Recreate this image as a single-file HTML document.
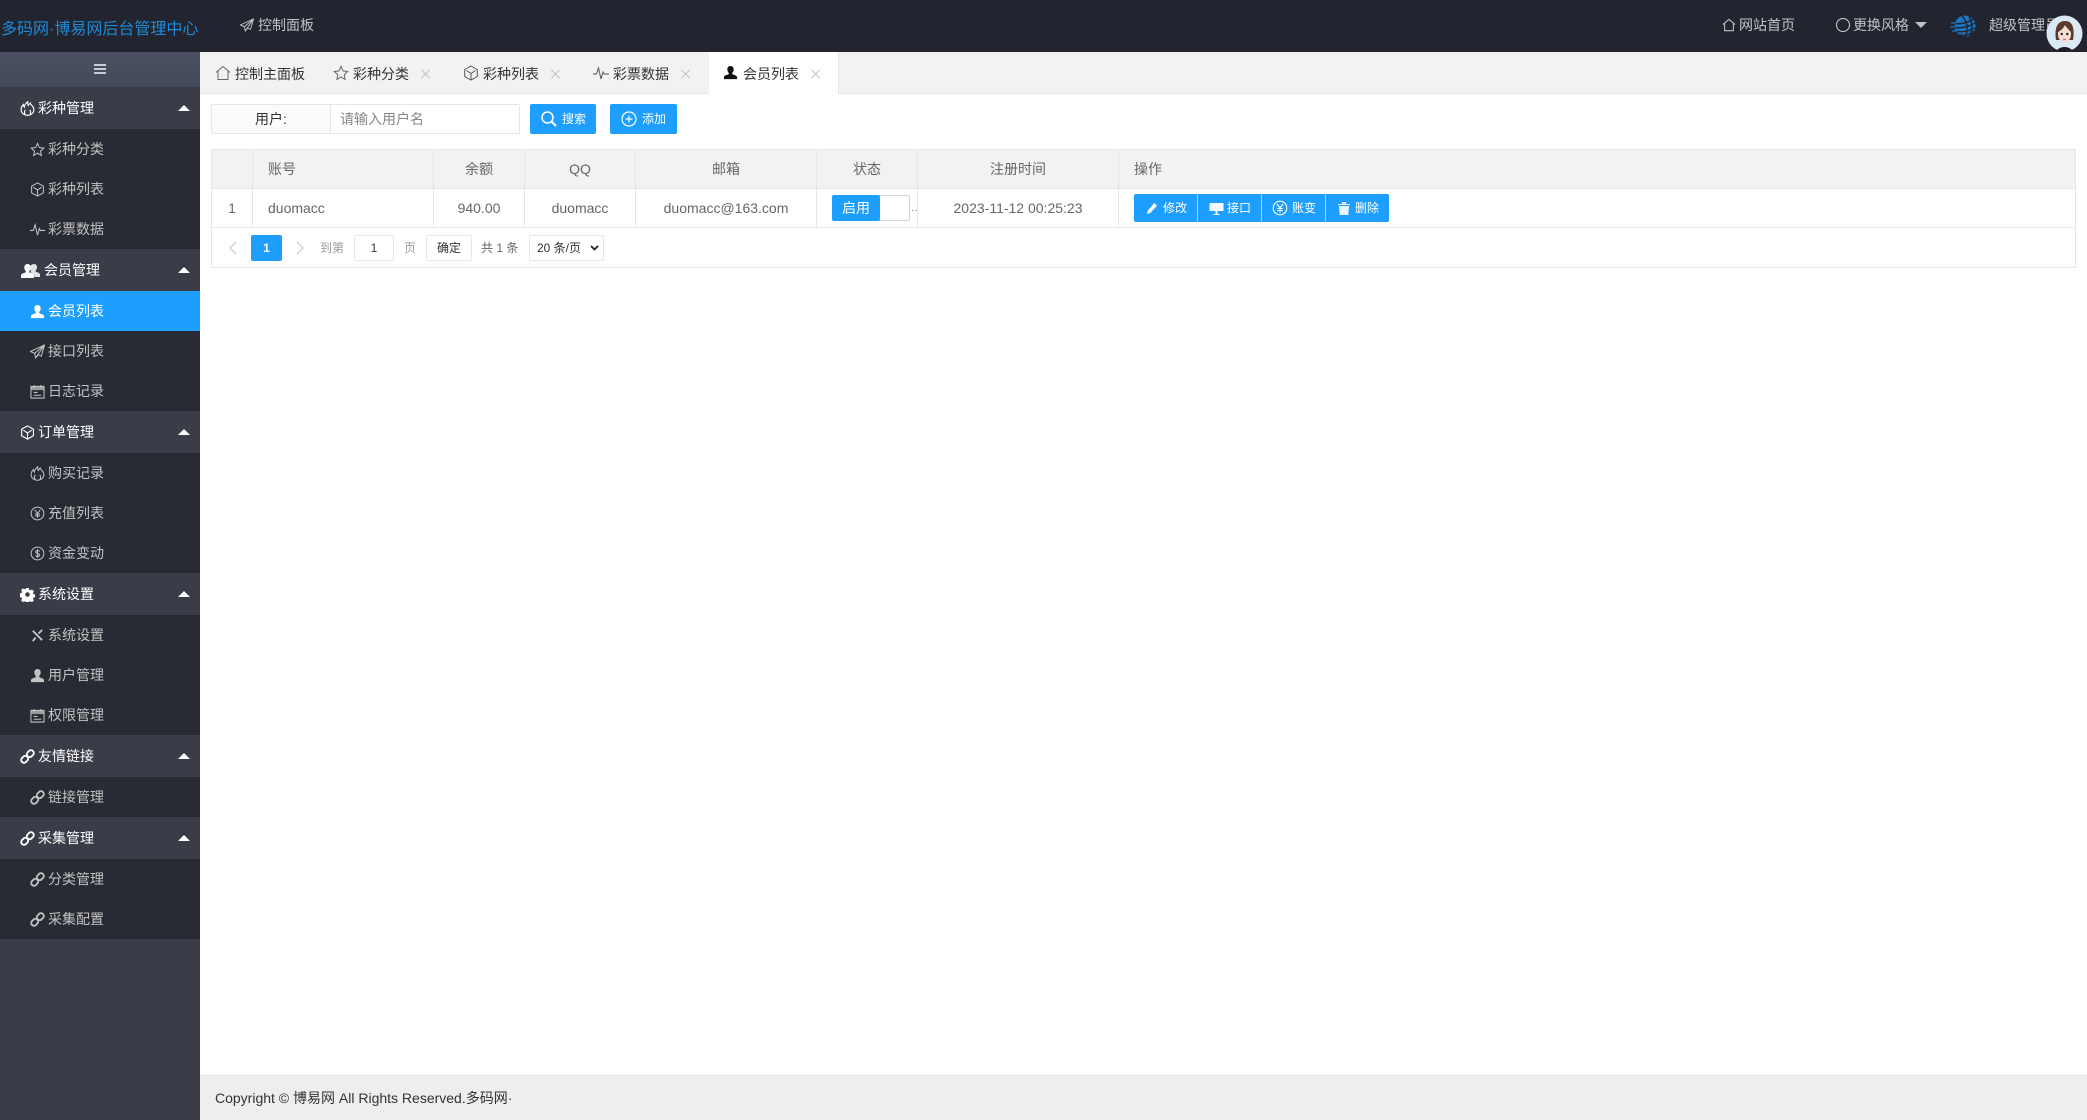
<!DOCTYPE html>
<html lang="zh-CN"><head><meta charset="utf-8"><title>后台管理中心</title>
<style>
*{box-sizing:border-box}
html,body{margin:0;padding:0;width:2087px;height:1120px;overflow:hidden;background:#fff;font-family:"Liberation Sans","Noto Sans CJK SC",sans-serif;font-size:14px;color:#666}
.a{position:absolute}
.t{position:absolute;white-space:nowrap}
svg{position:absolute;overflow:visible}
.g{position:absolute;left:0;width:200px;height:42px;background:#3a3d48;color:#fff;line-height:42px}
.i{position:absolute;left:0;width:200px;height:40px;background:#282b33;color:#c2c2c2;line-height:40px}
.g span,.i span{position:absolute;white-space:nowrap}
.g span{left:38px}.i span{left:48px}
.g svg{left:20px;top:14px;width:15px;height:15px;fill:none;stroke:#fff;stroke-width:1.2}
.i svg{left:30px;top:13px;width:15px;height:15px;fill:none;stroke:#c2c2c2;stroke-width:1.1}
.g i{position:absolute;left:178px;top:18px;border-left:6px solid transparent;border-right:6px solid transparent;border-bottom:6px solid #fff}
.th{position:absolute;top:149px;height:40px;line-height:39px;text-align:center;background:#f2f2f2;border-right:1px solid #e6e6e6;border-top:1px solid #e6e6e6;border-bottom:1px solid #e6e6e6}
.td{position:absolute;top:189px;height:39px;line-height:38px;text-align:center;background:#fff;border-right:1px solid #e6e6e6;border-bottom:1px solid #e6e6e6}
.tab{position:absolute;top:65px;white-space:nowrap;color:#333;line-height:18px}
.x{position:absolute;top:69px;width:10px;height:10px}
.x:before,.x:after{content:"";position:absolute;left:4px;top:-1px;width:1px;height:12px;background:#c4c4c4}
.x:before{transform:rotate(45deg)}.x:after{transform:rotate(-45deg)}
.btn{position:absolute;background:#1e9fff;color:#fff;border-radius:2px}
.box{position:absolute;background:#fff;border:1px solid #e6e6e6;border-radius:2px;text-align:center}
</style></head><body>
<svg width="0" height="0" style="position:absolute"><defs>
<symbol id="star" viewBox="0 0 16 16"><path d="M8 1.500l2 4.400 4.700.6-3.500 3.200.9 4.700L8 11.900l-4.100 2.500.9-4.700L1.300 6.500 6 5.900z"/></symbol>
<symbol id="box" viewBox="0 0 16 16"><path d="M8 1l6.300 3.500v7L8 15l-6.300-3.500v-7zM3.500 5.500L8 8.500l4.500-3M8 8.500v6"/></symbol>
<symbol id="pulse" viewBox="0 0 16 16"><path d="M0 9h3.500l2-6 2.500 11 2-7 1 2h5"/></symbol>
<symbol id="fire" viewBox="0 0 16 16"><path d="M8 15.200c-3.800 0-6.800-2.500-6.800-6 0-2.400 1-4 2.400-5.400.1 1.200.4 2 1 2.700C5 4.300 6 2.300 8.300.8c-.3 1.700-.1 3 .6 4 .4-.8 1-1.800 2-2.600 0 1.500 3.900 3.500 3.900 7 0 3.500-3 6-6.800 6z"/><path d="M5.800 15c-1.200-1.400-1.300-3.400-.3-5.600M10.300 15c1.200-1.400 1.300-3.400.3-5.600"/></symbol>
<symbol id="user" viewBox="0 0 16 16"><path stroke="none" d="M8 1c2.200 0 3.400 1.700 3.400 3.700 0 1.500-.7 3-1.600 3.800v1.200c1 .6 5 1.200 5.200 3.300V15H1v-2c.2-2.100 4.200-2.700 5.200-3.300V8.500C5.300 7.700 4.600 6.200 4.600 4.700 4.600 2.700 5.800 1 8 1z" fill="currentColor"/></symbol>
<symbol id="send" viewBox="0 0 16 16"><path d="M15.500 1L.5 8l4.500 2 1 4.800 2.800-3.300 3.200 1.500zM15.500 1L5 10M15.500 1L6 14.800"/></symbol>
<symbol id="cal" viewBox="0 0 16 16"><path d="M1 2.500h14v12.500H1zM4.500 1v3M11.500 1v3M4 9h4M4 12h8"/><path d="M1 2.500h14v4H1z" fill="currentColor" stroke="none" opacity=".75"/></symbol>
<symbol id="yen" viewBox="0 0 16 16"><circle cx="8" cy="8" r="6.800"/><path d="M5 4l3 4 3-4M8 8v4.500M5.300 8.500h5.400M5.300 10.500h5.400"/></symbol>
<symbol id="dollar" viewBox="0 0 16 16"><circle cx="8" cy="8" r="6.800"/><path d="M10.300 5.800C9.800 4.800 6 4.300 6 6.300c0 2.200 4.300 1.300 4.300 3.400 0 2-3.900 1.600-4.500.4M8 3.500v9"/></symbol>
<symbol id="gear" viewBox="0 0 16 16"><path fill="currentColor" stroke="none" fill-rule="evenodd" d="M6.600 1h2.800l.4 2 1.200.6 1.800-1 2 2-1 1.800.6 1.200 2 .4v2.800l-2 .4-.6 1.200 1 1.800-2 2-1.800-1-1.200.5-.4 2H6.600l-.4-2-1.200-.5-1.800 1-2-2 1-1.800-.6-1.200-2-.4V6.800l2-.4.600-1.200-1-1.800 2-2 1.800 1 1.200-.6zM8 5.600a2.400 2.400 0 1 0 0 4.800 2.400 2.400 0 0 0 0-4.800z"/></symbol>
<symbol id="tools" viewBox="0 0 16 16"><path stroke-width="2" d="M3 3l10 10M13 2L9 6M6 10l-3 4"/></symbol>
<symbol id="link" viewBox="0 0 16 16"><g stroke-width="2"><rect x="8" y="1" width="6" height="8" rx="3" transform="rotate(45 11 5)"/><rect x="2" y="7" width="6" height="8" rx="3" transform="rotate(45 5 11)"/></g></symbol>
<symbol id="home" viewBox="0 0 16 16"><path d="M1 7.500L8 1.500l7 6M3 6.500V14.500h10V6.500"/></symbol>
</defs></svg>

<!-- top bar -->
<div class="a" style="left:0;top:0;width:2087px;height:52px;background:#22252f"></div>
<div class="t" style="left:1px;top:18px;font-size:16px;line-height:24px;color:#1f8ad8">多码网·博易网后台管理中心</div>
<svg style="left:240px;top:18px;width:14px;height:14px;fill:none;stroke:#c2c2c2;stroke-width:1.100"><use href="#send"/></svg>
<div class="t" style="left:258px;top:15px;line-height:20px;color:#c2c2c2">控制面板</div>
<svg style="left:1722px;top:18px;width:14px;height:14px;fill:none;stroke:#c2c2c2;stroke-width:1.200"><use href="#home"/></svg>
<div class="t" style="left:1739px;top:15px;line-height:20px;color:#c2c2c2">网站首页</div>
<div class="a" style="left:1836px;top:18px;width:14px;height:14px;border:1.500px solid #d0d0d0;border-radius:50%"></div>
<div class="t" style="left:1853px;top:15px;line-height:20px;color:#c2c2c2">更换风格</div>
<div class="a" style="left:1915px;top:22px;border-left:6px solid transparent;border-right:6px solid transparent;border-top:6px solid #c2c2c2"></div>
<svg style="left:1950px;top:13px;width:26px;height:26px" viewBox="0 0 26 26"><circle cx="15" cy="13" r="10.500" fill="#1a76c4"/><path d="M3 10c8 2 15 0 22-5M2 14c8 2 16 0 23-4M4 18c8 2 15 0 21-3M9 22c6 1 11 0 15-4M12 3c5 5 7 14 3 21M19 3c3 6 4 13 1 19" fill="none" stroke="#22252f" stroke-width="1.500"/><path d="M1 10h5M0 14h5M2 18h5" stroke="#1a76c4" stroke-width="1.300"/></svg>
<div class="t" style="left:1989px;top:15px;line-height:20px;color:#c2c2c2">超级管理员</div>
<svg style="left:2046px;top:15px;width:37px;height:37px;z-index:5" viewBox="0 0 37 37"><circle cx="18.500" cy="18.500" r="18" fill="#dbe9f4"/><path d="M10 25C8 12 12 6 19 6c7 0 10 6 8 19z" fill="#5a3a2c"/><ellipse cx="18.500" cy="19" rx="6.500" ry="8.500" fill="#f5dcd0"/><path d="M12 17c2-1 5-3 7-7 2 3 4 5 6 7l1-6-7-4-7 3z" fill="#5a3a2c"/><circle cx="15.700" cy="19" r="1.200" fill="#222"/><circle cx="21.300" cy="19" r="1.200" fill="#222"/><path d="M17.300 24c.8.600 1.700.6 2.500 0" stroke="#c55" fill="none"/><path d="M11 35c2-2 5-3 7.500-3s5.500 1 7.500 3a18 18 0 0 1-15 0z" fill="#1e1e22"/></svg>

<!-- sidebar -->
<div class="a" style="left:0;top:52px;width:200px;height:1068px;background:#3a3d48"></div>
<div class="a" style="left:0;top:52px;width:200px;height:35px;background:linear-gradient(#4a5062,#454a5a)"></div>
<div class="a" style="left:94px;top:64px;width:12px;height:2px;background:#c9ccd2;box-shadow:0 4px 0 #c9ccd2,0 8px 0 #c9ccd2"></div>

<div class="g" style="top:87px"><svg><use href="#fire"/></svg><span>彩种管理</span><i></i></div>
<div class="i" style="top:129px"><svg><use href="#star"/></svg><span>彩种分类</span></div>
<div class="i" style="top:169px"><svg><use href="#box"/></svg><span>彩种列表</span></div>
<div class="i" style="top:209px"><svg><use href="#pulse"/></svg><span>彩票数据</span></div>
<div class="g" style="top:249px"><svg style="width:19px;height:15px;left:21px;color:#fff" viewBox="0 0 19 15"><path fill="#fff" stroke="none" d="M13 1c2 0 3 1.500 3 3.200 0 1.300-.6 2.600-1.300 3.300v1.100c.8.500 4.100 1 4.300 2.900V14h-5.500c-.1-2.700-2.200-3.700-3.700-4.300V7.500c-.6-.7-1-2-1-3.300C8.800 2.500 11 1 13 1z" opacity=".85"/><path fill="#fff" stroke="none" d="M6.500 1c2.100 0 3.200 1.600 3.200 3.500 0 1.400-.6 2.800-1.500 3.600v1.200c1 .6 4.600 1.100 4.800 3.100V15H0v-2.600c.2-2 3.800-2.500 4.800-3.100V8.100C3.900 7.300 3.300 5.900 3.300 4.500 3.300 2.600 4.400 1 6.500 1z"/></svg><span style="left:44px">会员管理</span><i></i></div>
<div class="i" style="top:291px;background:#1e9fff;color:#fff"><svg style="color:#fff"><use href="#user"/></svg><span>会员列表</span></div>
<div class="i" style="top:331px"><svg><use href="#send"/></svg><span>接口列表</span></div>
<div class="i" style="top:371px;color:#c2c2c2"><svg><use href="#cal"/></svg><span>日志记录</span></div>
<div class="g" style="top:411px"><svg><use href="#box"/></svg><span>订单管理</span><i></i></div>
<div class="i" style="top:453px"><svg><use href="#fire"/></svg><span>购买记录</span></div>
<div class="i" style="top:493px"><svg><use href="#yen"/></svg><span>充值列表</span></div>
<div class="i" style="top:533px"><svg><use href="#dollar"/></svg><span>资金变动</span></div>
<div class="g" style="top:573px"><svg style="color:#fff"><use href="#gear"/></svg><span>系统设置</span><i></i></div>
<div class="i" style="top:615px"><svg><use href="#tools"/></svg><span>系统设置</span></div>
<div class="i" style="top:655px"><svg style="color:#c2c2c2"><use href="#user"/></svg><span>用户管理</span></div>
<div class="i" style="top:695px;color:#c2c2c2"><svg><use href="#cal"/></svg><span>权限管理</span></div>
<div class="g" style="top:735px"><svg><use href="#link"/></svg><span>友情链接</span><i></i></div>
<div class="i" style="top:777px"><svg><use href="#link"/></svg><span>链接管理</span></div>
<div class="g" style="top:817px"><svg><use href="#link"/></svg><span>采集管理</span><i></i></div>
<div class="i" style="top:859px"><svg><use href="#link"/></svg><span>分类管理</span></div>
<div class="i" style="top:899px"><svg><use href="#link"/></svg><span>采集配置</span></div>

<!-- tabs -->
<div class="a" style="left:200px;top:52px;width:1887px;height:42px;background:#f2f2f2;border-bottom:1px solid #e6e6e6"></div>
<div class="a" style="left:709px;top:52px;width:130px;height:43px;background:#fff;border-right:1px solid #e6e6e6"></div>
<svg style="left:215px;top:65px;width:16px;height:16px;fill:none;stroke:#666"><use href="#home"/></svg>
<div class="tab" style="left:235px">控制主面板</div>
<svg style="left:333px;top:65px;width:16px;height:16px;fill:none;stroke:#666"><use href="#star"/></svg>
<div class="tab" style="left:353px">彩种分类</div><div class="x" style="left:421px"></div>
<svg style="left:463px;top:65px;width:16px;height:16px;fill:none;stroke:#555"><use href="#box"/></svg>
<div class="tab" style="left:483px">彩种列表</div><div class="x" style="left:551px"></div>
<svg style="left:593px;top:65px;width:16px;height:16px;fill:none;stroke:#555"><use href="#pulse"/></svg>
<div class="tab" style="left:613px">彩票数据</div><div class="x" style="left:681px"></div>
<svg style="left:723px;top:65px;width:15px;height:15px;color:#111"><use href="#user"/></svg>
<div class="tab" style="left:743px">会员列表</div><div class="x" style="left:811px"></div>

<!-- search -->
<div class="a" style="left:211px;top:104px;width:309px;height:30px;border:1px solid #e6e6e6;border-radius:2px;background:#fff"></div>
<div class="a" style="left:212px;top:105px;width:119px;height:28px;background:#fbfbfb;border-right:1px solid #e6e6e6"></div>
<div class="t" style="left:255px;top:109px;line-height:20px;color:#333">用户:</div>
<div class="t" style="left:340px;top:109px;line-height:20px;color:#888">请输入用户名</div>
<div class="btn" style="left:530px;top:104px;width:66px;height:30px"></div>
<svg style="left:541px;top:111px;width:16px;height:16px" viewBox="0 0 16 16" fill="none" stroke="#fff" stroke-width="1.500"><circle cx="6.500" cy="6.500" r="5.500"/><path d="M10.500 10.500L15 15" stroke-width="2.200"/></svg>
<div class="t" style="left:562px;top:110px;line-height:18px;font-size:12px;color:#fff">搜索</div>
<div class="btn" style="left:610px;top:104px;width:67px;height:30px"></div>
<svg style="left:621px;top:111px;width:16px;height:16px" viewBox="0 0 16 16" fill="none" stroke="#fff" stroke-width="1.200"><circle cx="8" cy="8" r="7"/><path d="M4.500 8h7M8 4.500v7"/></svg>
<div class="t" style="left:642px;top:110px;line-height:18px;font-size:12px;color:#fff">添加</div>

<!-- table -->
<div class="a" style="left:211px;top:149px;width:1865px;height:119px;border:1px solid #e6e6e6;border-top:0"></div>
<div class="th" style="left:211px;width:42px;border-left:1px solid #e6e6e6"></div>
<div class="th" style="left:253px;width:181px;text-align:left;padding-left:15px">账号</div>
<div class="th" style="left:434px;width:91px">余额</div>
<div class="th" style="left:525px;width:111px">QQ</div>
<div class="th" style="left:636px;width:181px">邮箱</div>
<div class="th" style="left:817px;width:101px">状态</div>
<div class="th" style="left:918px;width:201px">注册时间</div>
<div class="th" style="left:1119px;width:957px;text-align:left;padding-left:15px">操作</div>

<div class="td" style="left:211px;width:42px;border-left:1px solid #e6e6e6">1</div>
<div class="td" style="left:253px;width:181px;text-align:left;padding-left:15px">duomacc</div>
<div class="td" style="left:434px;width:91px">940.00</div>
<div class="td" style="left:525px;width:111px">duomacc</div>
<div class="td" style="left:636px;width:181px">duomacc@163.com</div>
<div class="td" style="left:817px;width:101px"></div>
<div class="td" style="left:918px;width:201px">2023-11-12 00:25:23</div>
<div class="td" style="left:1119px;width:957px"></div>

<div class="a" style="left:832px;top:195px;width:78px;height:26px;border:1px solid #d2d2d2;border-radius:2px;background:#fff"></div>
<div class="btn" style="left:832px;top:195px;width:48px;height:26px;text-align:center;line-height:26px;font-size:14px">启用</div>
<div class="t" style="left:911px;top:200px;font-size:12px;line-height:14px;color:#999">..</div>

<div class="btn" style="left:1134px;top:194px;width:255px;height:28px"></div>
<div class="a" style="left:1197px;top:194px;width:1px;height:28px;background:#9fd6ff"></div>
<div class="a" style="left:1261px;top:194px;width:1px;height:28px;background:#9fd6ff"></div>
<div class="a" style="left:1325px;top:194px;width:1px;height:28px;background:#9fd6ff"></div>
<svg style="left:1147px;top:203px;width:10px;height:11px" viewBox="0 0 11 12"><path d="M8 0l3 3-7.500 8L0 12l.8-3.500z" fill="#fff"/></svg>
<div class="t" style="left:1163px;top:199px;line-height:18px;font-size:12px;color:#fff">修改</div>
<svg style="left:1209px;top:202px;width:15px;height:13px" viewBox="0 0 14 13"><path d="M0 1h14v8H0zM6 9h2v3H6zM4 12h6v1H4z" fill="#fff" opacity=".95"/></svg>
<div class="t" style="left:1227px;top:199px;line-height:18px;font-size:12px;color:#fff">接口</div>
<svg style="left:1272px;top:200px;width:16px;height:16px;fill:none;stroke:#fff;stroke-width:1.100"><use href="#yen"/></svg>
<div class="t" style="left:1292px;top:199px;line-height:18px;font-size:12px;color:#fff">账变</div>
<svg style="left:1338px;top:202px;width:12px;height:13px" viewBox="0 0 12 13"><path d="M0 2h12v1H0zM4 0h4v2H4zM1 4h10l-.7 9H1.700z" fill="#fff" opacity=".9"/></svg>
<div class="t" style="left:1355px;top:199px;line-height:18px;font-size:12px;color:#fff">删除</div>

<!-- pagination -->
<svg style="left:228px;top:241px;width:9px;height:14px" viewBox="0 0 9 14"><path d="M8 1L2 7l6 6" fill="none" stroke="#d2d2d2" stroke-width="1.500"/></svg>
<div class="btn" style="left:251px;top:235px;width:31px;height:26px;text-align:center;line-height:26px;font-size:12px;font-weight:bold">1</div>
<svg style="left:296px;top:241px;width:9px;height:14px" viewBox="0 0 9 14"><path d="M1 1l6 6-6 6" fill="none" stroke="#d2d2d2" stroke-width="1.500"/></svg>
<div class="t" style="left:320px;top:239px;line-height:18px;font-size:12px;color:#999">到第</div>
<div class="box" style="left:354px;top:235px;width:40px;height:26px;line-height:24px;font-size:12px;color:#333">1</div>
<div class="t" style="left:404px;top:239px;line-height:18px;font-size:12px;color:#999">页</div>
<div class="box" style="left:426px;top:235px;width:46px;height:26px;line-height:25px;font-size:12px;color:#333">确定</div>
<div class="t" style="left:481px;top:239px;line-height:18px;font-size:12px;color:#666">共 1 条</div>
<div class="box" style="left:529px;top:235px;width:75px;height:26px;line-height:24px;font-size:12px;color:#333;text-align:left;padding-left:7px">20 条/页</div>
<svg style="left:590px;top:245px;width:9px;height:6px" viewBox="0 0 9 6"><path d="M1 1l3.500 3.500L8 1" fill="none" stroke="#222" stroke-width="1.800"/></svg>

<!-- footer -->
<div class="a" style="left:200px;top:1075px;width:1887px;height:45px;background:#eeeeee;border-top:1px solid #e6e6e6"></div>
<div class="t" style="left:215px;top:1088px;line-height:20px;color:#333">Copyright © 博易网 All Rights Reserved.多码网·</div>
</body></html>
